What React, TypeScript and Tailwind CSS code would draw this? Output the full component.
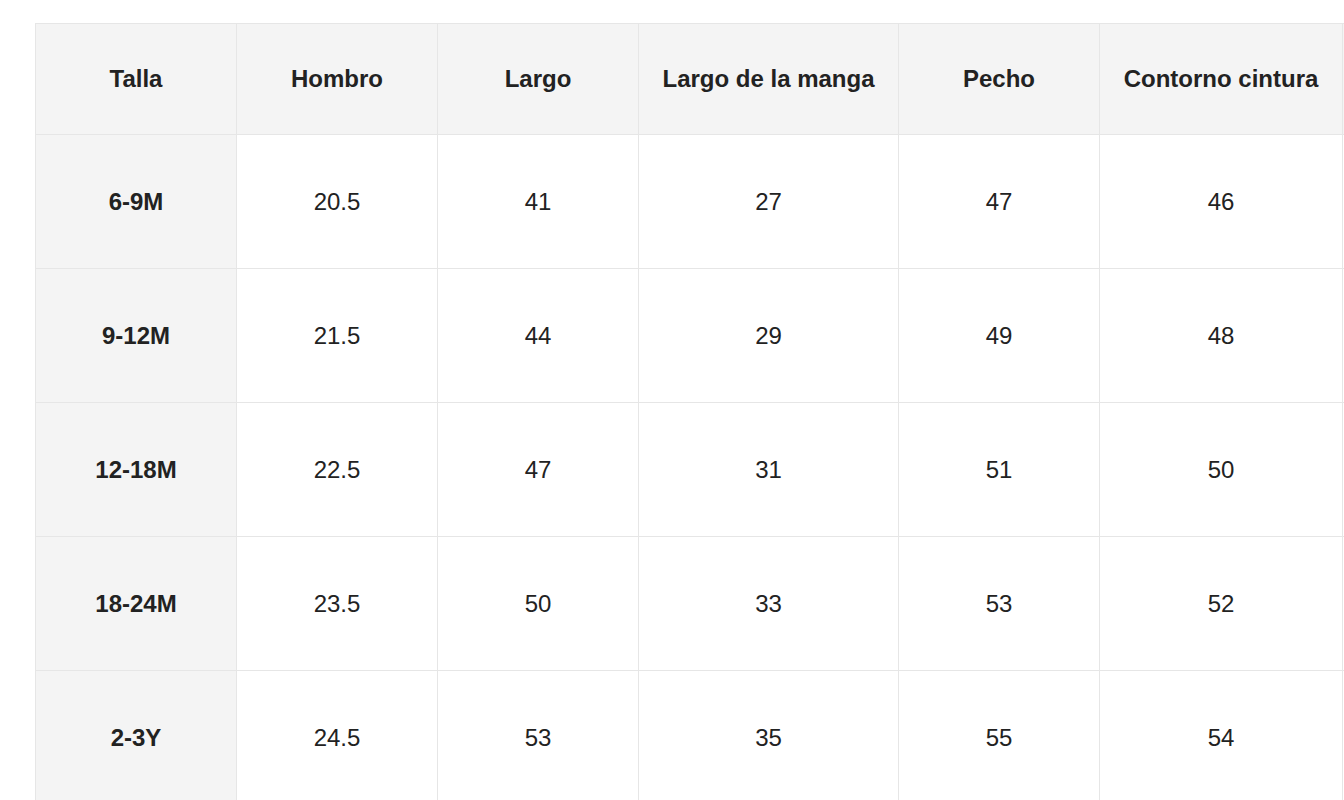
import React from "react";

const headers = ["Talla", "Hombro", "Largo", "Largo de la manga", "Pecho", "Contorno cintura", ""];
const rows = [
  ["6-9M", "20.5", "41", "27", "47", "46", ""],
  ["9-12M", "21.5", "44", "29", "49", "48", ""],
  ["12-18M", "22.5", "47", "31", "51", "50", ""],
  ["18-24M", "23.5", "50", "33", "53", "52", ""],
  ["2-3Y", "24.5", "53", "35", "55", "54", ""],
];

export default function App() {
  return (
    <div
      className="w-[1344px] h-[800px] overflow-hidden bg-white text-[#222222]"
      style={{ fontFamily: '"Liberation Sans", Arial, sans-serif' }}
    >
      <div className="pt-[23px] pl-[35px]">
        <div className="grid grid-cols-[201px_201px_201px_260px_201px_243px_201px] w-max border-l border-t border-[#e6e6e6]">
          {headers.map((h, i) => (
            <div
              key={"h" + i}
              className="h-[111px] flex items-center justify-center bg-[#f4f4f4] border-r border-b border-[#e6e6e6] text-[24px] font-bold"
            >
              {h}
            </div>
          ))}
          {rows.map((r, ri) =>
            r.map((c, ci) => (
              <div
                key={ri + "-" + ci}
                className={
                  ci === 0
                    ? "h-[134px] flex items-center justify-center bg-[#f4f4f4] border-r border-b border-[#e6e6e6] text-[24px] font-bold"
                    : "h-[134px] flex items-center justify-center bg-white border-r border-b border-[#e6e6e6] text-[24px]"
                }
              >
                {c}
              </div>
            ))
          )}
        </div>
      </div>
    </div>
  );
}
